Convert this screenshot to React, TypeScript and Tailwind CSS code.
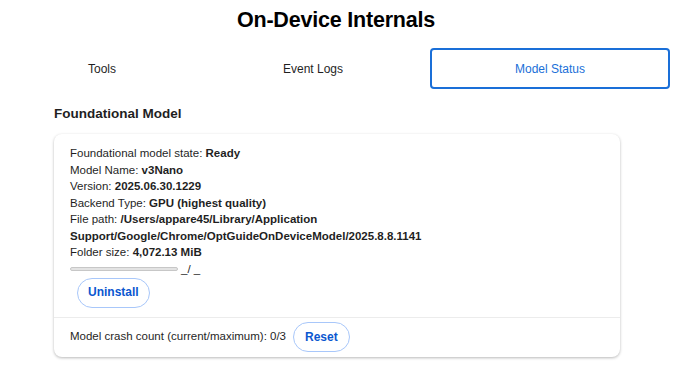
export default function App() {
  return (
    <div className="w-[680px] h-[385px] bg-white overflow-hidden text-[#1f1f1f]" style={{ fontFamily: '"Liberation Sans", Arial, sans-serif' }}>
      <h1 className="text-center text-[21.5px] font-bold pt-[7px] pr-[8px] leading-[26px] tracking-[-0.2px] text-black">On-Device Internals</h1>

      <div className="flex items-center mt-[15px] h-[41px] text-[12px]">
        <div className="w-[204px] text-center">Tools</div>
        <div className="w-[218px] text-center">Event Logs</div>
        <div className="w-[240px] ml-[8px] h-full rounded-[4px] border-2 border-[#1a6fd8] text-[#1a6fd8] flex items-center justify-center">
          Model Status
        </div>
      </div>

      <div className="px-[54px] pr-[60px]">
        <h2 className="text-[13.5px] font-bold mt-[16px] leading-[18px]">Foundational Model</h2>

        <div className="mt-[11px] rounded-[8px] bg-white shadow-[0_1px_3px_rgba(0,0,0,0.28)] text-[11.5px]">
          <div className="pl-[16px] pr-4 pt-[11px] pb-[9px] leading-[16.5px]">
            <div>Foundational model state: <b>Ready</b></div>
            <div>Model Name: <b>v3Nano</b></div>
            <div>Version: <b>2025.06.30.1229</b></div>
            <div>Backend Type: <b>GPU (highest quality)</b></div>
            <div>File path: <b>/Users/appare45/Library/Application Support/Google/Chrome/OptGuideOnDeviceModel/2025.8.8.1141</b></div>
            <div>Folder size: <b>4,072.13 MiB</b></div>
            <div className="flex items-center gap-[3px] h-[17px]">
              <div className="w-[108px] h-[4px] rounded-full bg-[#e3e3e3] border border-[#c7c7c7]" />
              <span>_/ _</span>
            </div>
            <button className="ml-[7px] h-[30px] px-[10px] rounded-full border border-[#a8c7fa] text-[#0b57d0] font-bold text-[12px]">
              Uninstall
            </button>
          </div>
          <div className="border-t border-[#ececec] flex items-center pl-[16px] h-[40px]">
            <span>Model crash count (current/maximum): 0/3</span>
            <button className="ml-[7px] h-[30px] px-[11px] rounded-full border border-[#a8c7fa] text-[#0b57d0] font-bold text-[12px]">
              Reset
            </button>
          </div>
        </div>
      </div>
    </div>
  )
}
